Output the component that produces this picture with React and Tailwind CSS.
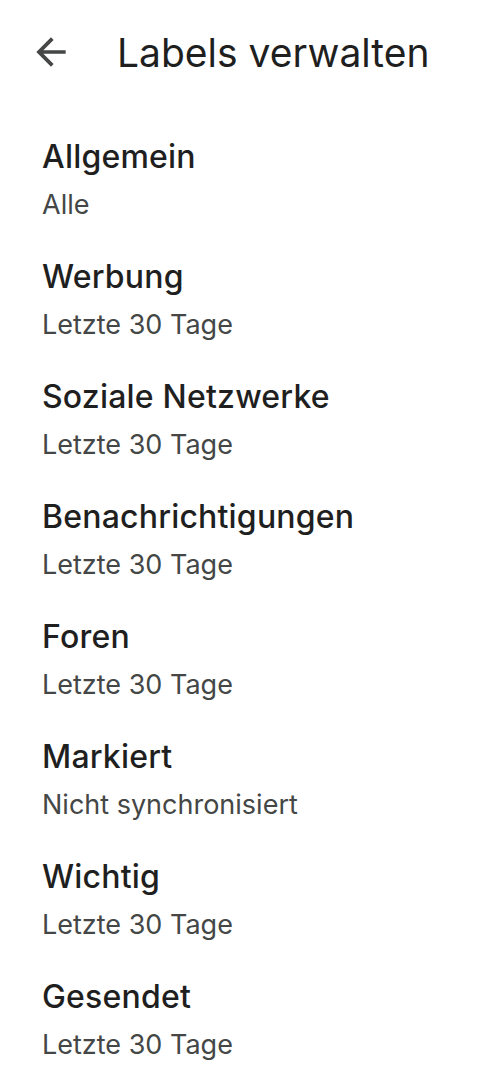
const labels = [
  { name: "Allgemein", sync: "Alle" },
  { name: "Werbung", sync: "Letzte 30 Tage" },
  { name: "Soziale Netzwerke", sync: "Letzte 30 Tage" },
  { name: "Benachrichtigungen", sync: "Letzte 30 Tage" },
  { name: "Foren", sync: "Letzte 30 Tage" },
  { name: "Markiert", sync: "Nicht synchronisiert" },
  { name: "Wichtig", sync: "Letzte 30 Tage" },
  { name: "Gesendet", sync: "Letzte 30 Tage" },
];

function BackIcon() {
  return (
    <svg className="w-[44px] h-[44px]" viewBox="0 -960 960 960" fill="#444746">
      <path d="M313-440l224 224-57 56-320-320 320-320 57 56-224 224h487v80H313Z" />
    </svg>
  );
}

export default function App() {
  return (
    <div className="w-[497px] h-[1080px] bg-white overflow-hidden" style={{ fontFamily: "Inter, Roboto, sans-serif" }}>
      {/* Top bar */}
      <div className="h-[104px] flex items-center">
        <div className="w-[100px] flex justify-center pl-[1px]">
          <BackIcon />
        </div>
        <h1 className="ml-[17px] text-[39px] text-[#1f1f1f] leading-none">Labels verwalten</h1>
      </div>

      {/* Label list */}
      <div className="pt-[33px] pl-[42px]">
        {labels.map((l) => (
          <div key={l.name} className="h-[120px]">
            <div className="text-[32px] leading-[40px] text-[#1f1f1f] font-medium tracking-[0.2px]">{l.name}</div>
            <div className="text-[27px] leading-[56px] text-[#444746]">{l.sync}</div>
          </div>
        ))}
      </div>
    </div>
  );
}
